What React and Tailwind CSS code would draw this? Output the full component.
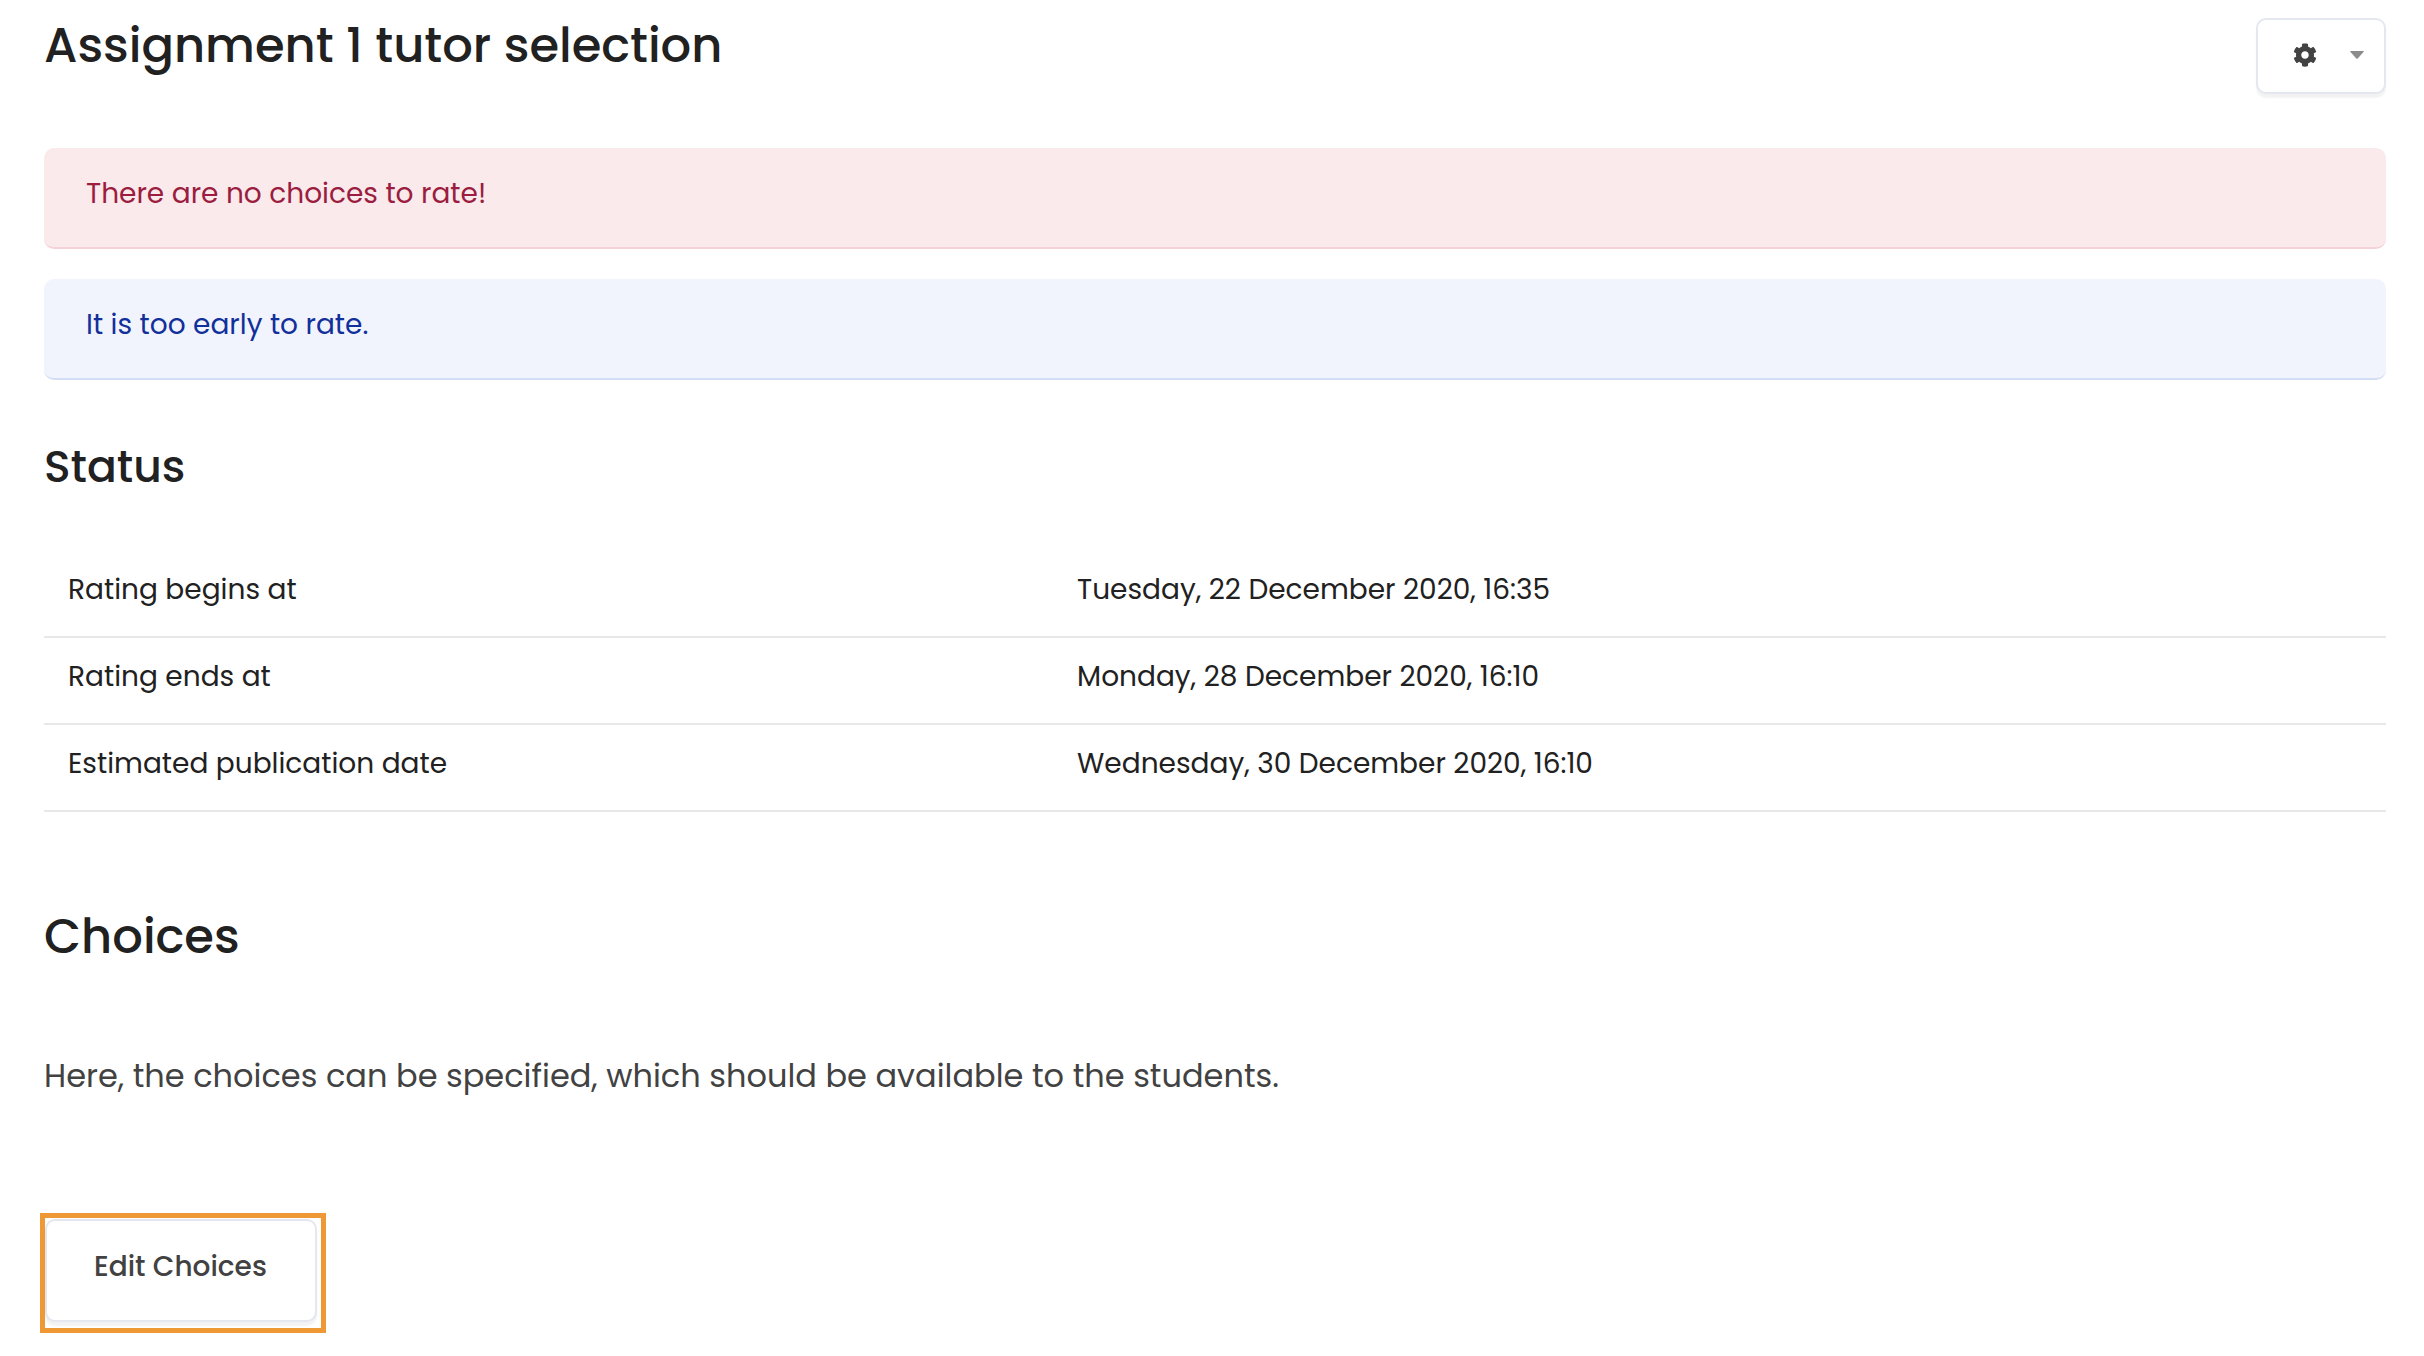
import React from 'react';
import { FaCog } from 'react-icons/fa';

const statusRows = [
  { label: 'Rating begins at', value: 'Tuesday, 22 December 2020, 16:35' },
  { label: 'Rating ends at', value: 'Monday, 28 December 2020, 16:10' },
  { label: 'Estimated publication date', value: 'Wednesday, 30 December 2020, 16:10' },
];

const alertStyles = {
  danger: 'bg-[#faeaeb] border-[#f5d2d7] text-[#9b1d3f]',
  info: 'bg-[#f1f4fd] border-[#d3ddf5] text-[#12309b]',
};

const Alert = ({ type, children }) => (
  <div
    role="alert"
    className={`rounded-[10px] border-b-2 px-[42px] pt-[25px] pb-8 text-[28px] leading-[42px] ${alertStyles[type]}`}
  >
    {children}
  </div>
);

const App = () => {
  return (
    <main className="bg-white pl-11 pr-[38px] pt-[18px] pb-[23px] font-['Poppins','Inter',sans-serif] text-[#212121]">
      <header className="flex items-start justify-between">
        <h1 className="text-[48px] leading-[56px] font-medium">Assignment 1 tutor selection</h1>
        <button
          type="button"
          aria-label="Actions menu"
          className="flex items-center gap-[33px] h-[76px] pl-[35px] pr-5 pb-0.5 bg-white border-2 border-[#e4e7ef] rounded-[10px] shadow-[0_4px_2px_rgba(0,0,0,0.05)]"
        >
          <FaCog size={24} className="text-[#424242]" />
          <svg viewBox="0 0 14 8" className="w-[14px] h-2 text-[#8c8c8c]" fill="currentColor" aria-hidden="true">
            <path d="M0.5 0h13q.6.5 0 1.1L7.7 7.5q-.7.6-1.4 0L.5 1.100Q-.1.5.5 0z" />
          </svg>
        </button>
      </header>

      <div className="mt-[54px] flex flex-col gap-[30px]">
        <Alert type="danger">There are no choices to rate!</Alert>
        <Alert type="info">It is too early to rate.</Alert>
      </div>

      <section className="mt-[62px]">
        <h2 className="text-[44px] leading-[50px] font-medium">Status</h2>
        <table className="mt-[59px] w-full table-fixed text-[28px] leading-[42px]">
          <tbody>
            {statusRows.map((row) => (
              <tr key={row.label} className="border-b-2 border-[#e8e8e8]">
                <th scope="row" className="w-[43%] px-6 pt-[18px] pb-[25px] text-left font-normal">{row.label}</th>
                <td className="pl-[26px] pr-6 pt-[18px] pb-[25px]">{row.value}</td>
              </tr>
            ))}
          </tbody>
        </table>
      </section>

      <section className="mt-[97px]">
        <h2 className="text-[48px] leading-[56px] font-medium">Choices</h2>
        <p className="mt-[87px] text-[32px] leading-[48px] text-[#424242]">
          Here, the choices can be specified, which should be available to the students.
        </p>
        <div className="mt-[113px] -ml-1 w-fit border-5 border-[#ee9936] pt-px pr-1 pb-1.5">
          <button
            type="button"
            className="block pl-[47px] pr-12 pt-[25px] pb-8 text-[28px] leading-[42px] font-medium text-[#424242] bg-white border-2 border-[#e4e7ef] rounded-[10px] shadow-[0_4px_2px_rgba(0,0,0,0.05)]"
          >
            Edit Choices
          </button>
        </div>
      </section>
    </main>
  );
};

export default App;
